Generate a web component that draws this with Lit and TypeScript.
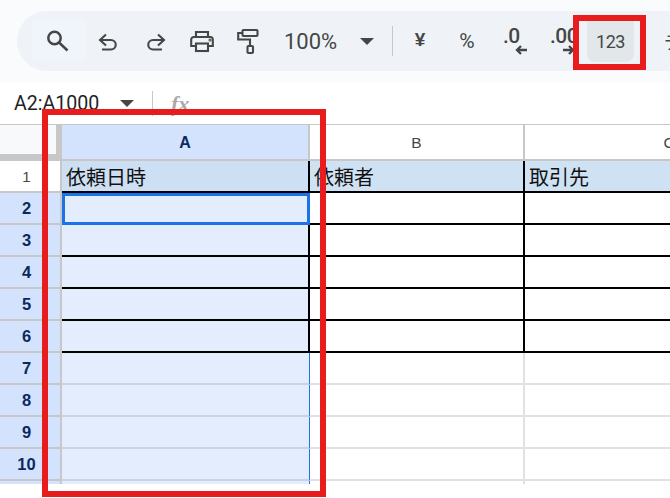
import { LitElement, html, css, svg } from "lit";
import { customElement } from "lit/decorators.js";

const icon = (w: number, h: number, body: unknown) =>
  html`<svg class="ic" width=${w} height=${h} viewBox="0 0 ${w} ${h}">${body}</svg>`;

const search = icon(26, 26, svg`<circle cx="8.5" cy="10" r="6.2" stroke-width="2.5"/><path d="M13 14.5l8.5 8" stroke-width="2.5"/>`);
const undo = icon(28, 28, svg`<path d="M6 12h11a4.75 4.75 0 0 1 0 9.5H8"/><path d="M12 6.5L6 12l6 5.5"/>`);
const redo = icon(28, 28, svg`<path d="M24 12H13a4.75 4.75 0 0 0 0 9.5h9"/><path d="M18 6.5l6 5.5-6 5.5"/>`);
const print = icon(28, 28, svg`<path d="M8 10V5h12v5"/><path d="M8 19H3.2v-6.5a2.5 2.5 0 0 1 2.5-2.5h16.6a2.5 2.5 0 0 1 2.5 2.5V19H20"/><rect x="8" y="16.5" width="12" height="7.5"/><circle cx="22" cy="13" r=".5"/>`);
const roller = icon(26, 28, svg`<rect x="7.5" y="3" width="15" height="6" rx="1"/><path d="M7.5 6H3.2v6.5H15V19"/><rect x="12.5" y="19" width="5.5" height="7" rx="1"/>`);
const leftArrow = icon(13, 10, svg`<path d="M12 5H2M6 1L2 5l4 4"/>`);
const rightArrow = icon(13, 10, svg`<path d="M1 5h10M7 1l4 4-4 4"/>`);

const rows = [1, 2, 3, 4, 5, 6, 7, 8, 9, 10];

@customElement("app-root")
export class AppRoot extends LitElement {
  static styles = css`
    :host { display: block; position: relative; width: 670px; height: 498px; overflow: hidden; background: #fff; font-family: Roboto, "Liberation Sans", sans-serif; color: #444746; }
    .top { height: 83px; box-sizing: border-box; padding: 11px 0 12px 17px; background: #f9fbfd; }
    .pill { height: 60px; width: 700px; border-radius: 30px 0 0 30px; background: #eff3f8; display: flex; align-items: center; padding-left: 15px; box-sizing: border-box; }
    .ic { fill: none; stroke: #444746; stroke-width: 2.1; display: block; }
    .b { display: flex; align-items: center; justify-content: center; height: 41px; flex: none; position: relative; }
    .search { width: 54px; background: #f0f4fb; margin-top: -1px; }
    .undo { width: 44px; padding-top: 2px; }
    .redo { width: 48px; padding-top: 2px; }
    .print { width: 47px; }
    .roller { width: 46px; }
    .zoom { width: 81px; font-size: 22px; justify-content: flex-start; padding-left: 13px; box-sizing: border-box; }
    .caret { width: 0; height: 0; border-left: 7px solid transparent; border-right: 7px solid transparent; border-top: 7px solid #444746; flex: none; }
    .caretb { width: 30px; }
    .sep { width: 1px; height: 30px; background: #c7c7c7; flex: none; margin: 0 7px 0 10px; }
    .yen { width: 40px; font-size: 19px; font-family: "Liberation Sans", sans-serif; font-weight: 700; padding-bottom: 2px; box-sizing: border-box; }
    .pct { width: 54px; font-size: 21px; }
    .dec { font-size: 21px; font-weight: 500; letter-spacing: -0.5px; justify-content: flex-start; box-sizing: border-box; }
    .dec.one { width: 46px; padding-left: 9px; }
    .dec.two { width: 47px; padding-left: 10px; }
    .dec span { position: relative; top: -5px; }
    .dec .ic { position: absolute; top: 24px; stroke-width: 2.3; }
    .dec.one .ic { left: 21px; }
    .dec.two .ic { left: 22px; }
    .num { width: 47px; height: 42px; background: #e2e7ea; border-radius: 0 0 8px 8px; font-size: 18px; letter-spacing: -0.4px; align-self: flex-end; margin-bottom: 9px; }
    .font { margin-left: 30px; font-size: 18px; white-space: nowrap; font-family: "Noto Sans CJK JP", sans-serif; }
    .formula { height: 42px; box-sizing: border-box; border-bottom: 1px solid #c7c7c7; display: flex; align-items: center; background: #fff; }
    .name { width: 120px; padding-left: 14px; box-sizing: border-box; font-size: 19.6px; color: #1f1f1f; flex: none; }
    .fsep { width: 1px; height: 25px; background: #c7c7c7; margin-left: 18px; }
    .fx { margin-left: 18px; font: italic bold 22px "Liberation Serif", serif; color: #a9a9a9; }
    .row { display: grid; grid-template-columns: 62px 248px 215px 290px; height: 32px; }
    .head { height: 36px; }
    .corner { background: #c7c7c7; padding: 0 6px 7px 0; box-sizing: border-box; }
    .corner div { height: 100%; background: #f8f9fa; }
    .ch { display: flex; align-items: center; justify-content: center; padding-top: 1px; font: 15.5px "Liberation Sans", sans-serif; color: #444746; box-sizing: border-box; border-right: 2px solid #c7c7c7; border-bottom: 2px solid #c7c7c7; }
    .ch.sel { background: #d3e3fd; color: #0b2a5c; font-weight: 700; font-size: 16px; }
    .rh { display: flex; align-items: center; justify-content: center; box-sizing: border-box; padding-right: 7px; border-right: 2px solid #c7c7c7; border-bottom: 2px solid #c7c7c7; background: #d3e3fd; color: #0b2a5c; font: 700 16.5px "Liberation Sans", sans-serif; }
    .rh.plain { background: #fff; color: #444746; font-weight: 400; font-size: 15px; }
    .c { box-sizing: border-box; border-right: 2px solid #000; border-bottom: 2px solid #000; font: 20px "Noto Sans CJK JP", sans-serif; color: #111; display: flex; align-items: center; padding-left: 4px; overflow: hidden; white-space: nowrap; }
    .c.title { background: #cfe2f3; }
    .c.title.sel { background: #cde0f3; }
    .c.sel { background: #e4edfd; }
    .c.free { border-color: #e1e1e1; }
    .c.free.sel { border-bottom-color: #c9d3e3; border-right: 1px solid #1a73e8; }
    .c.active { outline: 3px solid #1a73e8; outline-offset: -3px; }
    .tail { display: grid; grid-template-columns: 62px 248px 215px 290px; height: 3px; }
    .tail .rh { border-bottom: 0; }
    .tail .c { border-bottom: 0; }
    .mark { position: absolute; box-sizing: border-box; border: 6px solid #e81c1c; }
    .mark.col { left: 42px; top: 109px; width: 284px; height: 388px; }
    .mark.btn { left: 573px; top: 15px; width: 73px; height: 55px; }
  `;

  render() {
    return html`
      <div class="top">
        <div class="pill">
          <div class="b search">${search}</div>
          <div class="b undo">${undo}</div>
          <div class="b redo">${redo}</div>
          <div class="b print">${print}</div>
          <div class="b roller">${roller}</div>
          <div class="b zoom">100%</div>
          <div class="b caretb"><div class="caret"></div></div>
          <div class="sep"></div>
          <div class="b yen">¥</div>
          <div class="b pct">%</div>
          <div class="b dec one"><span>.0</span>${leftArrow}</div>
          <div class="b dec two"><span>.00</span>${rightArrow}</div>
          <div class="b num">123</div>
          <div class="font">デフォルト</div>
        </div>
      </div>
      <div class="formula">
        <div class="name">A2:A1000</div>
        <div class="caret"></div>
        <div class="fsep"></div>
        <div class="fx">fx</div>
      </div>
      <div class="row head">
        <div class="corner"><div></div></div>
        <div class="ch sel">A</div>
        <div class="ch">B</div>
        <div class="ch">C</div>
      </div>
      ${rows.map((n) => this.renderRow(n))}
      <div class="tail">
        <div class="rh"></div>
        <div class="c sel free"></div>
        <div class="c free"></div>
        <div class="c free"></div>
      </div>
      <div class="mark col"></div>
      <div class="mark btn"></div>
    `;
  }

  private renderRow(n: number) {
    const free = n > 6 ? "free" : "";
    const title = n === 1 ? "title" : "";
    const active = n === 2 ? "active" : "";
    const labels = n === 1 ? ["依頼日時", "依頼者", "取引先"] : ["", "", ""];
    return html`<div class="row">
      <div class="rh ${n === 1 ? "plain" : ""}">${n}</div>
      <div class="c sel ${free} ${title} ${active}">${labels[0]}</div>
      <div class="c ${free} ${title}">${labels[1]}</div>
      <div class="c ${free} ${title}">${labels[2]}</div>
    </div>`;
  }
}
